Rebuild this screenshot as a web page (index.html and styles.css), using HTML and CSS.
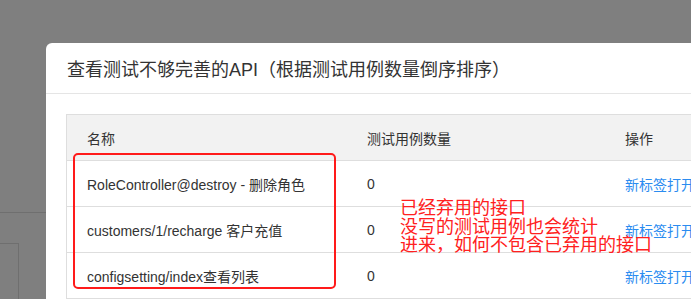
FILE: index.html
```html
<!DOCTYPE html>
<html>

<head>
    <meta charset="utf-8">
    <title>查看测试不够完善的API</title>
    <link rel="stylesheet" href="styles.css">
</head>

<body>
    <div class="page">
        <div class="page-bar"></div>
        <div class="page-box"></div>
    </div>

    <div class="modal">
        <div class="modal-header">
            <div class="modal-title">查看测试不够完善的API（根据测试用例数量倒序排序）</div>
        </div>
        <div class="modal-body">
            <div class="table-wrap">
                <table class="table">
                    <thead>
                        <tr>
                            <th class="col-name">名称</th>
                            <th class="col-count">测试用例数量</th>
                            <th class="col-action">操作</th>
                        </tr>
                    </thead>
                    <tbody>
                        <tr>
                            <td>RoleController@destroy - 删除角色</td>
                            <td>0</td>
                            <td><a class="link" href="#">新标签打开</a></td>
                        </tr>
                        <tr>
                            <td>customers/1/recharge 客户充值</td>
                            <td>0</td>
                            <td><a class="link" href="#">新标签打开</a></td>
                        </tr>
                        <tr>
                            <td>configsetting/index查看列表</td>
                            <td>0</td>
                            <td><a class="link" href="#">新标签打开</a></td>
                        </tr>
                    </tbody>
                </table>
                <div class="mark-box"></div>
                <div class="mark-note">已经弃用的接口<br>没写的测试用例也会统计<br>进来，如何不包含已弃用的接口</div>
            </div>
        </div>
    </div>
</body>

</html>
```

FILE: styles.css
```css
body {
    margin: 0;
    background: #7f7f7f;
    font-family: 'Liberation Sans', 'Noto Sans CJK SC', sans-serif;
    color: #333;
    overflow: hidden;
}

.page {
    height: 299px;
}

.page-bar {
    height: 212px;
    border-bottom: 1px solid #6f6f6f;
}

.page-box {
    margin-top: 30px;
    width: 18px;
    height: 60px;
    border-top: 1px solid #6f6f6f;
    border-right: 1px solid #6f6f6f;
}

.modal {
    position: fixed;
    left: 46px;
    top: 43px;
    width: 720px;
    height: 320px;
    background: white;
    border-radius: 6px;
}

.modal-header {
    height: 50px;
    padding: 0 21px;
    border-bottom: 1px solid #e5e5e5;
    display: flex;
    align-items: center;
}

.modal-title {
    font-size: 18px;
    color: #333;
    white-space: nowrap;
}

.modal-body {
    padding: 20px;
}

.table-wrap {
    position: relative;
}

.table {
    width: 660px;
    border-collapse: collapse;
    border: 1px solid #dedede;
    font-size: 14px;
}

.table th {
    background: #f2f2f2;
    font-weight: normal;
    text-align: left;
    height: 45px;
    padding: 0 20px;
    white-space: nowrap;
}

.table td {
    height: 45px;
    padding: 0 20px;
    border-top: 1px solid #dedede;
    white-space: nowrap;
}

.col-name {
    width: 240px;
}

.col-count {
    width: 218px;
}

.link {
    color: #2b8cf0;
    text-decoration: none;
}

.mark-box {
    position: absolute;
    left: 7px;
    top: 39px;
    width: 259px;
    height: 132px;
    border: 2.5px solid #ff1a1a;
    border-radius: 5px;
}

.mark-note {
    position: absolute;
    left: 334px;
    top: 85px;
    font-size: 18px;
    line-height: 18.5px;
    color: #ff2020;
    white-space: nowrap;
}
```
